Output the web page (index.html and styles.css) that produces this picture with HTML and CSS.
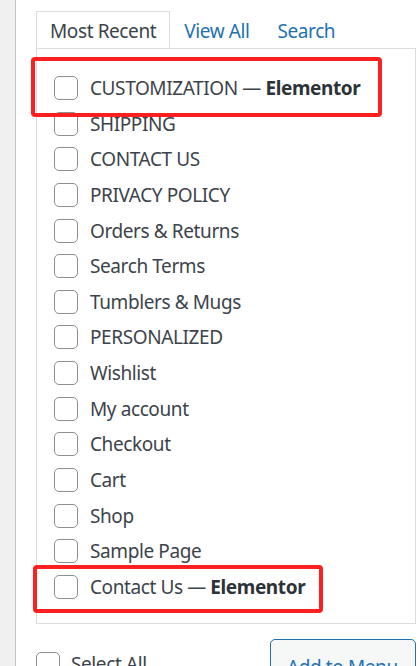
FILE: index.html
```html
<!DOCTYPE html>
<html>
<head>
<meta charset="utf-8">
<link rel="stylesheet" href="styles.css">
</head>
<body>
<div class="page">
  <div class="strip"></div>
  <div class="main">
    <div class="tabs">
      <span class="tab active">Most Recent</span>
      <a class="tab">View All</a>
      <a class="tab">Search</a>
    </div>
    <div class="panel">
      <ul class="list">
        <li class="row"><span class="cb"></span><span>CUSTOMIZATION — <b>Elementor</b></span></li>
        <li class="row"><span class="cb"></span><span>SHIPPING</span></li>
        <li class="row"><span class="cb"></span><span>CONTACT US</span></li>
        <li class="row"><span class="cb"></span><span>PRIVACY POLICY</span></li>
        <li class="row"><span class="cb"></span><span>Orders &amp; Returns</span></li>
        <li class="row"><span class="cb"></span><span>Search Terms</span></li>
        <li class="row"><span class="cb"></span><span>Tumblers &amp; Mugs</span></li>
        <li class="row"><span class="cb"></span><span>PERSONALIZED</span></li>
        <li class="row"><span class="cb"></span><span>Wishlist</span></li>
        <li class="row"><span class="cb"></span><span>My account</span></li>
        <li class="row"><span class="cb"></span><span>Checkout</span></li>
        <li class="row"><span class="cb"></span><span>Cart</span></li>
        <li class="row"><span class="cb"></span><span>Shop</span></li>
        <li class="row"><span class="cb"></span><span>Sample Page</span></li>
        <li class="row"><span class="cb"></span><span>Contact Us — <b>Elementor</b></span></li>
      </ul>
    </div>
    <div class="footer">
      <label class="selectall"><span class="cb"></span><span>Select All</span></label>
      <span class="button">Add to Menu</span>
    </div>
  </div>
</div>
<div class="mark mark1"></div>
<div class="mark mark2"></div>
</body>
</html>
```
FILE: styles.css
```css
html, body {
  margin: 0;
  padding: 0;
  background: #ffffff;
  overflow: hidden;
}
body {
  font-family: "Noto Sans", "Open Sans", sans-serif;
  font-size: 19px;
  letter-spacing: -0.4px;
  color: #3c434a;
  width: 420px;
  height: 666px;
  position: relative;
}
.page {
  display: flex;
  height: 666px;
}
.strip {
  width: 15px;
  flex: none;
  background: #f0f0f1;
  border-right: 1px solid #c3c4c7;
}
.main {
  flex: none;
  width: 380px;
  padding: 11px 0 0 20px;
}
.tabs {
  display: flex;
  height: 37px;
}
.tab {
  display: flex;
  align-items: center;
  padding: 3px 13px 0;
  border: 1px solid transparent;
  border-bottom: none;
  color: #2271b1;
  line-height: 1;
}
.tab.active {
  border-color: #dcdcde;
  color: #3c434a;
}
.panel {
  border: 1px solid #dcdcde;
  height: 574px;
}
.list {
  list-style: none;
  margin: 0;
  padding: 21.2px 0 0 17px;
}
.row {
  display: flex;
  align-items: center;
  gap: 12px;
  height: 35.64px;
  white-space: nowrap;
}
.row b {
  font-weight: 700;
  color: #2c3338;
}
.cb {
  width: 22px;
  height: 22px;
  flex: none;
  border: 1px solid #8c8f94;
  border-radius: 5px;
  background: #fff;
}
.footer {
  display: flex;
  justify-content: space-between;
  align-items: flex-start;
  margin-top: 15px;
}
.selectall {
  display: flex;
  align-items: center;
  gap: 11px;
  margin-top: 12px;
}
.button {
  display: flex;
  align-items: center;
  height: 43px;
  width: 146px;
  padding: 12px 0 0 16px;
  box-sizing: border-box;
  border: 1px solid #2271b1;
  border-radius: 5px;
  background: #f6f7f7;
  color: #2271b1;
}
.mark {
  position: absolute;
  border: 4px solid #fe2020;
  border-radius: 4px;
  box-sizing: border-box;
}
.mark1 {
  left: 31px;
  top: 57px;
  width: 351px;
  height: 60px;
}
.mark2 {
  left: 33px;
  top: 565px;
  width: 290px;
  height: 48px;
}
```
